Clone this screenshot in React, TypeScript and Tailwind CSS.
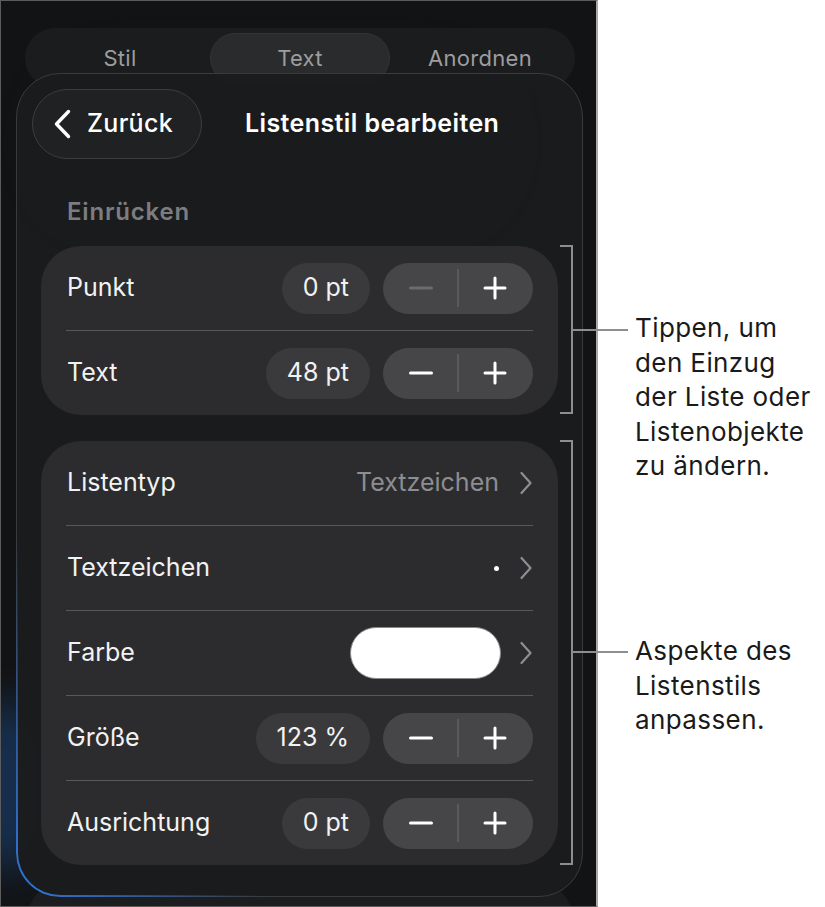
import React from "react";

function Chevron() {
  return (
    <svg width="14" height="24" viewBox="0 0 14 24" fill="none">
      <path d="M2.5 2 L11.5 12 L2.5 22" stroke="#8d8d92" strokeWidth="2.2" strokeLinecap="round" strokeLinejoin="round" />
    </svg>
  );
}

function Minus({ dim }: { dim?: boolean }) {
  return (
    <svg width="24" height="24" viewBox="0 0 24 24">
      <path d="M1.5 12 H22.5" stroke={dim ? "#6b6b6e" : "#ffffff"} strokeWidth="3" strokeLinecap="round" />
    </svg>
  );
}

function Plus() {
  return (
    <svg width="24" height="24" viewBox="0 0 24 24">
      <path d="M2 12 H22 M12 2 V22" stroke="#ffffff" strokeWidth="3" strokeLinecap="round" />
    </svg>
  );
}

function Stepper({ value, minusDim }: { value: string; minusDim?: boolean }) {
  return (
    <div className="flex items-center gap-[13px]">
      <div className="h-[51px] px-[21px] rounded-full bg-[#3a3a3c] flex items-center text-[25px] text-[#f2f2f2]">
        {value}
      </div>
      <div className="h-[51px] w-[150px] rounded-full bg-[#464648] flex items-center">
        <div className="flex-1 flex items-center justify-center pl-[2px]">
          <Minus dim={minusDim} />
        </div>
        <div className="w-[2px] h-[38px] bg-[#5a5a5c]" />
        <div className="flex-1 flex items-center justify-center pr-[2px]">
          <Plus />
        </div>
      </div>
    </div>
  );
}

function Row({ label, children }: { label: string; children: React.ReactNode }) {
  return (
    <div className="h-[84px] pl-[26px] pr-[25px] flex items-center justify-between">
      <span className="text-[25px] text-[#f2f2f2]">{label}</span>
      {children}
    </div>
  );
}

function Divider() {
  return <div className="mx-[25px] h-px bg-[#58585a]" />;
}

function Bracket({ top, bottom, mid }: { top: number; bottom: number; mid: number }) {
  return (
    <>
      <div className="absolute z-30 left-[560px] w-[13px] h-[2px] bg-[#8e8e8e]" style={{ top }} />
      <div className="absolute z-30 left-[571px] w-[2px] bg-[#8e8e8e]" style={{ top, height: bottom - top + 2 }} />
      <div className="absolute z-30 left-[560px] w-[13px] h-[2px] bg-[#8e8e8e]" style={{ top: bottom }} />
      <div className="absolute z-30 left-[571px] w-[57px] h-[2px] bg-[#8e8e8e]" style={{ top: mid }} />
    </>
  );
}

export default function App() {
  return (
    <div className="relative w-[825px] h-[907px] bg-white overflow-hidden font-[Inter,'Liberation_Sans',sans-serif]">
      <div className="relative w-[598px] h-[907px] bg-[#121314] border-t border-l border-b border-[#5c5c5c] border-r-2 border-r-[#a8a8a8] overflow-hidden">
        {/* blurred backdrop tints */}
        <div className="absolute left-[-30px] top-[700px] w-[70px] h-[170px] rounded-full bg-[#1d4f8f] opacity-50 blur-[22px]" />
        <div className="absolute left-[60px] top-[80px] w-[420px] h-[120px] rounded-full bg-[#232425] opacity-70 blur-[30px]" />

        {/* segmented tabs */}
        <div className="relative mt-[27px] ml-[24px] w-[550px] h-[60px] rounded-full bg-[#1b1c1d] p-[5px] grid grid-cols-3 text-[22px] tracking-[0.3px] text-[#9d9d9f]">
          <div className="flex items-center justify-center h-[50px]">Stil</div>
          <div className="flex items-center justify-center h-[50px] rounded-full bg-[#2a2b2c] border border-[#333436]">Text</div>
          <div className="flex items-center justify-center h-[50px]">Anordnen</div>
        </div>

        {/* sheet */}
        <div className="relative z-10 mt-[-15px] ml-[15px] w-[567px] h-[824px] rounded-[44px] border border-[#3a3b3d] bg-[#1a1b1c]/95">
          <div className="absolute inset-[-1px] rounded-[44px] border-l-2 border-b-2 border-[#2f6fcf] [mask-image:linear-gradient(to_top_right,black_3%,transparent_22%)] pointer-events-none" />

          <div className="flex items-center pt-[15px] pl-[15px]">
            <div className="h-[70px] w-[170px] rounded-full border border-[#3c3d3f] bg-[#202122] flex items-center pl-[20px] gap-[16px]">
              <svg width="18" height="30" viewBox="0 0 18 30" fill="none">
                <path d="M15.5 2.5 L3.5 15 L15.5 27.5" stroke="#ffffff" strokeWidth="3.4" strokeLinecap="round" strokeLinejoin="round" />
              </svg>
              <span className="text-[25px] tracking-[0.3px] text-white font-medium">Zurück</span>
            </div>
            <div className="ml-[43px] text-[25px] tracking-[0.4px] font-semibold text-white">Listenstil bearbeiten</div>
          </div>

          <div className="mt-[39px] ml-[50px] h-[28px] leading-[28px] text-[24px] tracking-[0.8px] font-semibold text-[#7c7d81]">Einrücken</div>

          <div className="mt-[20px] mx-[24px] rounded-[40px] bg-[#2c2c2e]">
            <Row label="Punkt">
              <Stepper value="0 pt" minusDim />
            </Row>
            <Divider />
            <Row label="Text">
              <Stepper value="48 pt" />
            </Row>
          </div>

          <div className="mt-[26px] mx-[24px] rounded-[40px] bg-[#2c2c2e]">
            <Row label="Listentyp">
              <div className="flex items-center gap-[20px]">
                <span className="text-[25px] text-[#8d8d92]">Textzeichen</span>
                <Chevron />
              </div>
            </Row>
            <Divider />
            <Row label="Textzeichen">
              <div className="flex items-center gap-[20px]">
                <span className="w-[5px] h-[5px] rounded-full bg-white" />
                <Chevron />
              </div>
            </Row>
            <Divider />
            <Row label="Farbe">
              <div className="flex items-center gap-[18px]">
                <span className="w-[151px] h-[52px] rounded-full bg-white border border-[#8a8a8a]" />
                <Chevron />
              </div>
            </Row>
            <Divider />
            <Row label="Größe">
              <Stepper value="123 %" />
            </Row>
            <Divider />
            <Row label="Ausrichtung">
              <Stepper value="0 pt" />
            </Row>
          </div>
        </div>

        {/* panel peeking below the sheet */}
        <div className="mt-[-17px] ml-[26px] w-[546px] h-[60px] rounded-t-[40px] bg-[#1c1d1e]" />
      </div>

      {/* callouts */}
      <Bracket top={245} bottom={412} mid={329} />
      <Bracket top={440} bottom={863} mid={651} />

      <div className="absolute left-[635px] top-[311px] text-[26px] tracking-[0.4px] leading-[34.5px] text-[#1a1a1a]">
        <div>Tippen, um</div>
        <div>den Einzug</div>
        <div>der Liste oder</div>
        <div>Listenobjekte</div>
        <div>zu ändern.</div>
      </div>
      <div className="absolute left-[635px] top-[634px] text-[26px] tracking-[0.4px] leading-[34.5px] text-[#1a1a1a]">
        <div>Aspekte des</div>
        <div>Listenstils</div>
        <div>anpassen.</div>
      </div>
    </div>
  );
}
